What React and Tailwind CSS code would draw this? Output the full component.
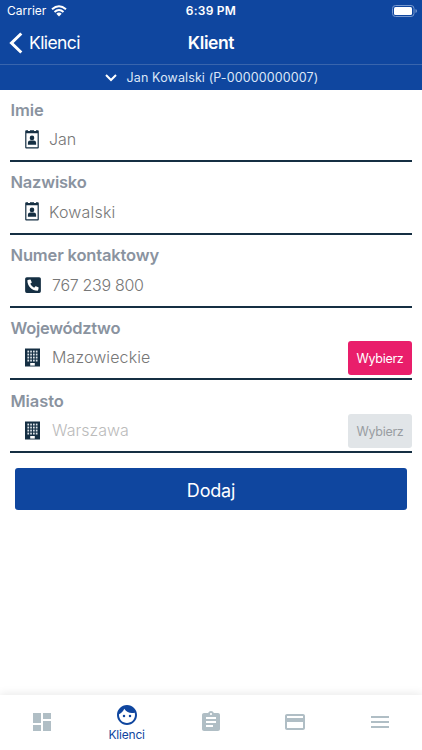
import { MdDashboard, MdFace, MdAssignment, MdCreditCard, MdMenu } from 'react-icons/md';
import { FaPhoneSquareAlt } from 'react-icons/fa';

const valueFont = "font-['Inter','Liberation_Sans',sans-serif] font-light";

function BadgeIcon() {
  return (
    <svg width="14" height="19" viewBox="0 0 14 19" className="shrink-0">
      <path fill="#152f43" fillRule="evenodd" d="M1.2.3H3v.8h2V.3h4v.8h2V.3h1.800q1 0 1 1V17.500q0 1-1 1H1.200q-1 0-1-1V1.300q0-1 1-1ZM1.400 3.300V17.300h11.200V3.300Z" />
      <circle cx="7" cy="7.900" r="2.300" fill="#152f43" />
      <path fill="#152f43" d="M2.900 14.700v-1.900q0-2.400 2.400-2.400h3.400q2.400 0 2.400 2.400v1.900Z" />
    </svg>
  );
}

function BuildingIcon() {
  const cells = [0, 1, 2, 3];
  return (
    <svg width="15" height="19" viewBox="0 0 15 19" className="shrink-0">
      <path fill="#152f43" d="M0 .5h15v18H0Z" />
      <path fill="#fff" d="M5.200 15h4.600v2.600H5.200Z" />
      {cells.map((r) => cells.map((c) => (
        <rect key={`${r}${c}`} x={2.400 + c * 2.800} y={2.600 + r * 3} width="1.700" height="1.900" fill="#dfe5ea" />
      )))}
    </svg>
  );
}

function Field({ label, labelTrack, icon, value, valueClass, action, actionClass }) {
  return (
    <section className="h-[72.75px]">
      <div className="flex h-[72px] flex-col border-b-2 border-[#152f43]">
        <h2 className={`h-[30px] pt-[9.5px] pl-[0.5px] text-[16.5px] leading-[20px] font-semibold text-[#8a939f] whitespace-nowrap ${labelTrack}`}>{label}</h2>
        <div className="flex h-[38px] items-center justify-between pl-[15px]">
          <div className="flex items-center">
            {icon}
            <span className={`${valueFont} text-[16px] leading-[20px] whitespace-nowrap ${valueClass}`}>{value}</span>
          </div>
          {action && <button className={`mt-[1px] h-[34px] w-[64px] shrink-0 rounded-[3px] pt-[3px] text-[12.5px] tracking-[-0.3px] ${actionClass}`}>{action}</button>}
        </div>
      </div>
    </section>
  );
}

export default function App() {
  return (
    <div className="flex h-[750px] w-[422px] flex-col overflow-hidden bg-white font-['Inter','Liberation_Sans',sans-serif]">
      <header className="h-[90px] shrink-0 bg-[#0f469f] text-white">
        <div className="grid h-[22px] grid-cols-3 items-center">
          <div className="flex items-center gap-[5px] pl-[7px] text-[12px]">
            <span>Carrier</span>
            <svg width="16" height="12" viewBox="0 0 16 12" fill="none" stroke="white" strokeWidth="2">
              <path d="M1 4.300Q8-1.900 15 4.300M3.500 7Q8 3 12.500 7" />
              <path fill="white" stroke="none" d="M5.300 8.700Q8 6.500 10.700 8.700L8 11.500Z" />
            </svg>
          </div>
          <span className="text-center text-[12px] font-semibold tracking-[0.25px]">6:39 PM</span>
          <svg className="mr-[4px] justify-self-end" width="26" height="12" viewBox="0 0 26 12">
            <rect x=".5" y=".5" width="21.500" height="11" rx="3" fill="none" stroke="#7899cf" />
            <rect x="2" y="2" width="18" height="8" rx="1.500" fill="white" />
            <path d="M23.500 4v4q1.500-.7 1.500-2t-1.500-2Z" fill="#7899cf" />
          </svg>
        </div>
        <div className="grid h-[43px] grid-cols-3 items-center border-b border-[#3965ad]">
          <div className="flex items-center gap-[6px] pl-[9px]">
            <svg width="14" height="22" viewBox="0 0 14 22" fill="none" stroke="white" strokeWidth="3"><path d="M12.300 1.500 2.500 11l9.800 9.500" /></svg>
            <span className="text-[17.500px] font-normal tracking-[-0.6px]">Klienci</span>
          </div>
          <h1 className="text-center text-[17.500px] font-semibold tracking-[-0.4px]">Klient</h1>
        </div>
        <div className="flex h-[25px] items-center justify-center gap-[10px] pl-[1px]">
          <svg width="12" height="8" viewBox="0 0 12 8" fill="none" stroke="white" strokeWidth="2"><path d="m1 1 5 5 5-5" /></svg>
          <span className="pt-px text-[12.500px] tracking-[0.12px] text-[#dce6f8]">Jan Kowalski (P-00000000007)</span>
        </div>
      </header>
      <main className="flex-1 px-[10px]">
        <Field label="Imie" labelTrack="tracking-[-0.1px]" icon={<BadgeIcon />} value="Jan" valueClass="ml-[10px] text-[#777]" />
        <Field label="Nazwisko" labelTrack="tracking-[-0.2px]" icon={<BadgeIcon />} value="Kowalski" valueClass="ml-[10px] tracking-[0.2px] text-[#777]" />
        <Field label="Numer kontaktowy" labelTrack="tracking-[-0.15px]" icon={<FaPhoneSquareAlt size={18} color="#152f43" className="-ml-px mr-px" />} value="767 239 800" valueClass="ml-[9px] tracking-[-0.3px] text-[#777]" />
        <Field label="Województwo" labelTrack="tracking-[-0.3px]" icon={<BuildingIcon />} value="Mazowieckie" valueClass="ml-[12px] tracking-[0.1px] text-[#777]" action="Wybierz" actionClass="bg-[#e91e6b] text-white" />
        <Field label="Miasto" labelTrack="tracking-[-0.1px]" icon={<BuildingIcon />} value="Warszawa" valueClass="ml-[12px] text-[#bbb]" action="Wybierz" actionClass="bg-[#e1e5e8] text-[#999da2]" />
        <button className="mx-[5px] mt-[14.25px] h-[42px] w-[392px] rounded-[3px] bg-[#0f469f] pt-[2px] text-[18px] tracking-[-0.2px] text-white">Dodaj</button>
      </main>
      <nav className="grid h-[55px] shrink-0 grid-cols-5 text-[#b0bec5] shadow-[0_-2px_8px_rgba(0,0,0,0.08)]">
        <div className="flex justify-center pt-[15px]"><MdDashboard size={24} /></div>
        <div className="flex flex-col items-center pt-[8px] text-[#0f469f]">
          <MdFace size={24} />
          <span className="text-[12px] leading-[15px] tracking-[-0.2px]">Klienci</span>
        </div>
        <div className="flex justify-center pt-[15px]"><MdAssignment size={24} /></div>
        <div className="flex justify-center pt-[15px]"><MdCreditCard size={24} /></div>
        <div className="flex justify-center pt-[15px]"><MdMenu size={24} /></div>
      </nav>
    </div>
  );
}
